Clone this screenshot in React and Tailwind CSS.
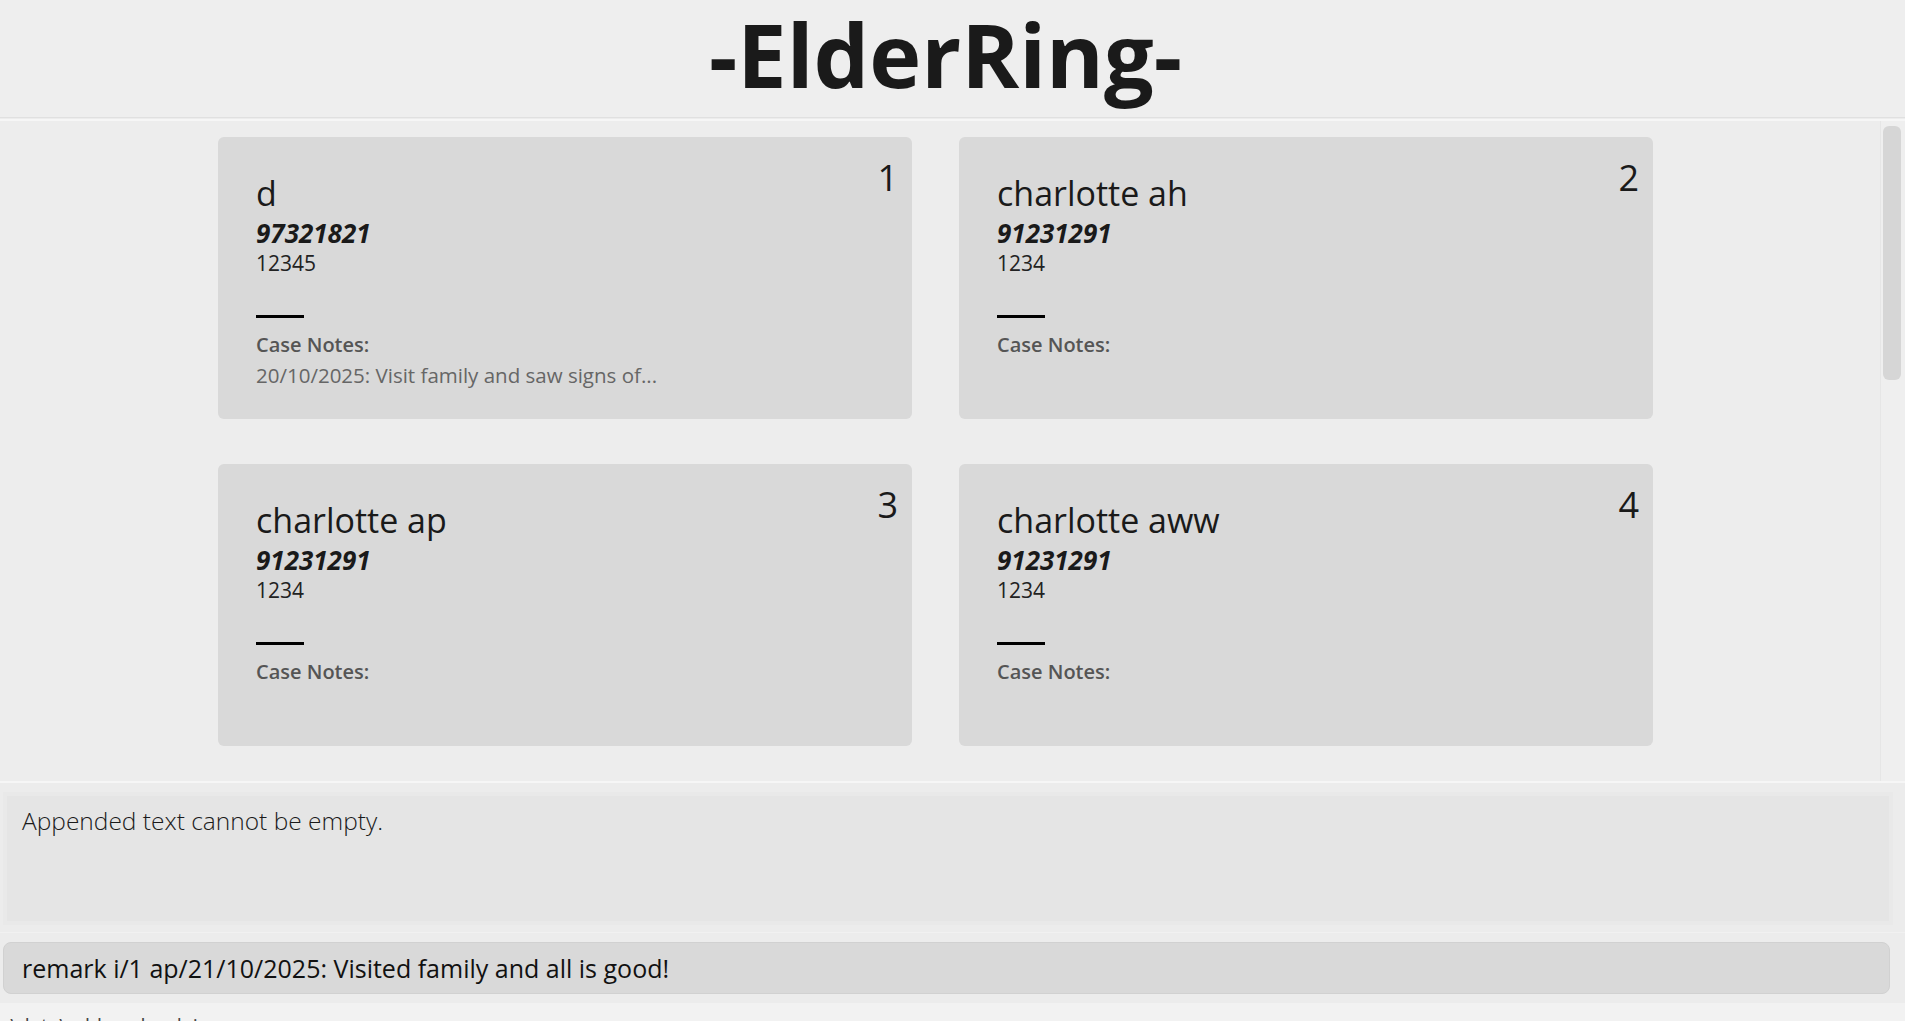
import React from "react";

const persons = [
  { name: "d", phone: "97321821", address: "12345", note: "20/10/2025: Visit family and saw signs of..." },
  { name: "charlotte ah", phone: "91231291", address: "1234", note: "" },
  { name: "charlotte ap", phone: "91231291", address: "1234", note: "" },
  { name: "charlotte aww", phone: "91231291", address: "1234", note: "" },
  { name: "charlotte b", phone: "91231291", address: "1234", note: "" },
  { name: "charlotte c", phone: "91231291", address: "1234", note: "" },
];

const font = { fontFamily: '"Open Sans", "Noto Sans", sans-serif' };

const PersonCard = ({ person, index }) => (
  <div className="relative h-[282px] rounded-md bg-[#d9d9d9] pl-[38px] pt-[33px]">
    <div className="absolute right-[14px] top-[23px] text-[36px] leading-none text-[#1a1a1a]">
      {index}
    </div>
    <div className="text-[34px] leading-[46px] text-[#1a1a1a]">{person.name}</div>
    <div className="text-[26px] font-bold italic leading-[34px] text-[#1a1a1a]">
      {person.phone}
    </div>
    <div className="text-[21px] leading-[26px] text-[#222]">{person.address}</div>
    <div className="mt-[39px] h-[3px] w-[48px] bg-black" />
    <div className="mt-[13px] text-[20px] font-semibold leading-[28px] text-[#555]">
      Case Notes:
    </div>
    {person.note && (
      <div className="mt-[2px] text-[20.5px] leading-[28px] text-[#666]">{person.note}</div>
    )}
  </div>
);

export default function App() {
  return (
    <div className="flex h-screen flex-col overflow-hidden bg-[#ededed]" style={font}>
      {/* title */}
      <header className="h-[117px] shrink-0 bg-[#eeeeee] pr-[14px] text-center">
        <h1 className="text-[88px] font-bold leading-[108px] text-[#1a1a1a]">-ElderRing-</h1>
      </header>
      <div className="h-[1px] shrink-0 bg-[#e0e0e0]" />
      <div className="h-[1px] shrink-0 bg-[#ececec]" />
      <div className="h-[2px] shrink-0 bg-[#f6f6f6]" />

      {/* person list */}
      <div className="flex h-[660px] shrink-0 overflow-hidden bg-[#ededed]">
        <div className="flex-1 overflow-hidden pr-[9px] pt-[16px]">
          <div className="grid grid-cols-[694px_694px] justify-center gap-x-[47px] gap-y-[45px]">
            {persons.map((p, i) => (
              <PersonCard key={i} person={p} index={i + 1} />
            ))}
          </div>
        </div>
        <div className="w-[25px] shrink-0 border-l border-[#e6e6e6] bg-[#efefef] pl-[2px] pt-[5px]">
          <div className="h-[254px] w-[18px] rounded-md bg-[#d6d6d6]" />
        </div>
      </div>
      <div className="h-[2px] shrink-0 bg-[#f6f6f6]" />

      {/* result display */}
      <div className="shrink-0 bg-[#ececec] pb-[7px] pl-[3px] pr-[12px] pt-[9px]">
        <div className="h-[133px] border-4 border-[#e9e9e9] bg-[#e5e5e5] px-[15px] pt-[9px]">
          <p className="text-[24.5px] font-light leading-[32px] text-[#1a1a1a]">
            Appended text cannot be empty.
          </p>
        </div>
      </div>
      <div className="h-[1px] shrink-0 bg-[#f1f1f1]" />

      {/* command box */}
      <div className="shrink-0 bg-[#ececec] pb-[9px] pl-[3px] pr-[15px] pt-[9px]">
        <div className="flex h-[52px] items-center rounded-lg border border-[#d1d1d1] bg-[#d9d9d9] px-[18px]">
          <span className="text-[25px] leading-none text-[#111]">
            remark i/1 ap/21/10/2025: Visited family and all is good!
          </span>
        </div>
      </div>

      {/* status bar */}
      <div className="h-[18px] shrink-0 overflow-hidden bg-[#f2f2f2] pl-[5px] pt-[9px]">
        <span className="text-[20px] leading-[28px] text-[#444]">.\data\addressbook.json</span>
      </div>
    </div>
  );
}
